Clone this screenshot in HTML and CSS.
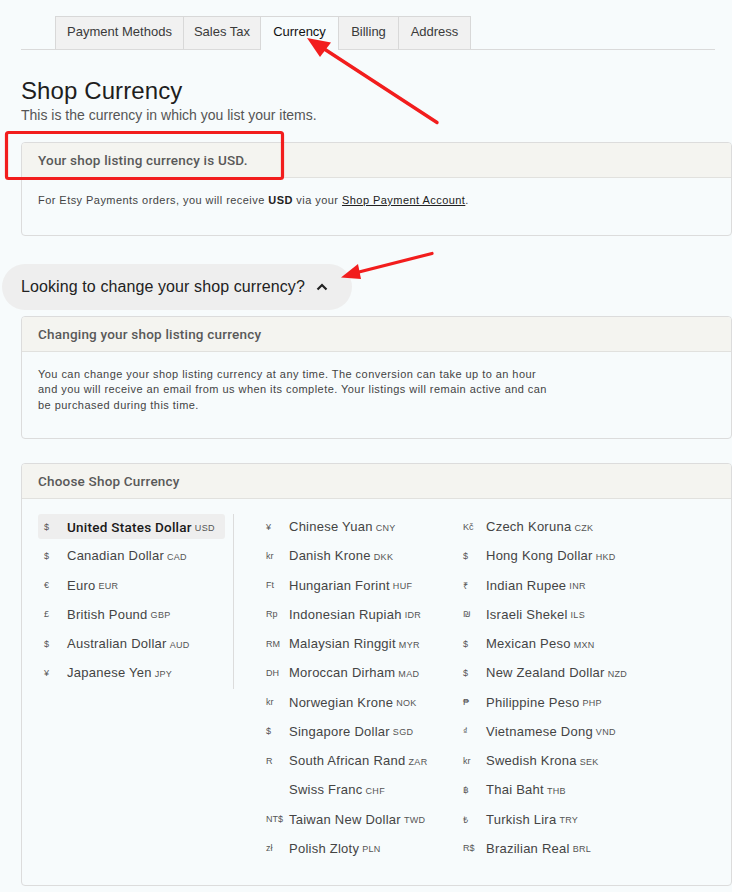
FILE: index.html
```html
<!DOCTYPE html>
<html lang="en">
<head>
<meta charset="utf-8">
<title>Shop Currency</title>
<link rel="stylesheet" href="styles.css">
</head>
<body>
<div class="page">
  <nav class="tabs">
    <span class="tab tab-pay">Payment Methods</span>
    <span class="tab tab-tax">Sales Tax</span>
    <span class="tab tab-cur active">Currency</span>
    <span class="tab tab-bill">Billing</span>
    <span class="tab tab-addr">Address</span>
  </nav>

  <h1 class="title">Shop Currency</h1>
  <p class="subtitle">This is the currency in which you list your items.</p>

  <section class="card card-first">
    <div class="card-head">Your shop listing currency is USD.</div>
    <div class="card-body body-first">
      <p class="small">For Etsy Payments orders, you will receive <b>USD</b> via your <a class="link">Shop Payment Account</a>.</p>
    </div>
  </section>

  <button class="pill">Looking to change your shop currency?
    <svg class="chev" width="12" height="8" viewBox="0 0 12 8"><path d="M1.5 6.5 L6 2 L10.5 6.5" fill="none" stroke="#222" stroke-width="2.2"/></svg>
  </button>

  <section class="card card-second">
    <div class="card-head">Changing your shop listing currency</div>
    <div class="card-body body-second">
      <p class="small">You can change your shop listing currency at any time. The conversion can take up to an hour<br>and you will receive an email from us when its complete. Your listings will remain active and can<br>be purchased during this time.</p>
    </div>
  </section>

  <section class="card card-third">
    <div class="card-head">Choose Shop Currency</div>
    <div class="cur-body">
      <div class="col col-main">
        <div class="row selected"><span class="sym">$</span><span class="name">United States Dollar</span><span class="code">USD</span></div>
        <div class="row"><span class="sym">$</span><span class="name">Canadian Dollar</span><span class="code">CAD</span></div>
        <div class="row"><span class="sym">€</span><span class="name">Euro</span><span class="code">EUR</span></div>
        <div class="row"><span class="sym">£</span><span class="name">British Pound</span><span class="code">GBP</span></div>
        <div class="row"><span class="sym">$</span><span class="name">Australian Dollar</span><span class="code">AUD</span></div>
        <div class="row"><span class="sym">¥</span><span class="name">Japanese Yen</span><span class="code">JPY</span></div>
      </div>
      <div class="col col-a">
        <div class="row"><span class="sym">¥</span><span class="name">Chinese Yuan</span><span class="code">CNY</span></div>
        <div class="row"><span class="sym">kr</span><span class="name">Danish Krone</span><span class="code">DKK</span></div>
        <div class="row"><span class="sym">Ft</span><span class="name">Hungarian Forint</span><span class="code">HUF</span></div>
        <div class="row"><span class="sym">Rp</span><span class="name">Indonesian Rupiah</span><span class="code">IDR</span></div>
        <div class="row"><span class="sym">RM</span><span class="name">Malaysian Ringgit</span><span class="code">MYR</span></div>
        <div class="row"><span class="sym">DH</span><span class="name">Moroccan Dirham</span><span class="code">MAD</span></div>
        <div class="row"><span class="sym">kr</span><span class="name">Norwegian Krone</span><span class="code">NOK</span></div>
        <div class="row"><span class="sym">$</span><span class="name">Singapore Dollar</span><span class="code">SGD</span></div>
        <div class="row"><span class="sym">R</span><span class="name">South African Rand</span><span class="code">ZAR</span></div>
        <div class="row"><span class="sym"></span><span class="name">Swiss Franc</span><span class="code">CHF</span></div>
        <div class="row"><span class="sym">NT$</span><span class="name">Taiwan New Dollar</span><span class="code">TWD</span></div>
        <div class="row"><span class="sym">zł</span><span class="name">Polish Zloty</span><span class="code">PLN</span></div>
      </div>
      <div class="col col-b">
        <div class="row"><span class="sym">Kč</span><span class="name">Czech Koruna</span><span class="code">CZK</span></div>
        <div class="row"><span class="sym">$</span><span class="name">Hong Kong Dollar</span><span class="code">HKD</span></div>
        <div class="row"><span class="sym">₹</span><span class="name">Indian Rupee</span><span class="code">INR</span></div>
        <div class="row"><span class="sym">₪</span><span class="name">Israeli Shekel</span><span class="code">ILS</span></div>
        <div class="row"><span class="sym">$</span><span class="name">Mexican Peso</span><span class="code">MXN</span></div>
        <div class="row"><span class="sym">$</span><span class="name">New Zealand Dollar</span><span class="code">NZD</span></div>
        <div class="row"><span class="sym">₱</span><span class="name">Philippine Peso</span><span class="code">PHP</span></div>
        <div class="row"><span class="sym">₫</span><span class="name">Vietnamese Dong</span><span class="code">VND</span></div>
        <div class="row"><span class="sym">kr</span><span class="name">Swedish Krona</span><span class="code">SEK</span></div>
        <div class="row"><span class="sym">฿</span><span class="name">Thai Baht</span><span class="code">THB</span></div>
        <div class="row"><span class="sym">₺</span><span class="name">Turkish Lira</span><span class="code">TRY</span></div>
        <div class="row"><span class="sym">R$</span><span class="name">Brazilian Real</span><span class="code">BRL</span></div>
      </div>
    </div>
  </section>

  <svg class="annot" width="732" height="892" viewBox="0 0 732 892">
    <rect x="6.5" y="132.5" width="276" height="46" rx="2" fill="none" stroke="#f21d1d" stroke-width="3.2"/>
    <line x1="437" y1="122.5" x2="322" y2="47.5" stroke="#f21d1d" stroke-width="3.4" stroke-linecap="round"/>
    <polygon points="307,38 331,42.5 320,57" fill="#f21d1d"/>
    <line x1="432" y1="253.5" x2="355" y2="273" stroke="#f21d1d" stroke-width="3.2" stroke-linecap="round"/>
    <polygon points="341,277.5 358,264 361,279" fill="#f21d1d"/>
  </svg>
</div>
</body>
</html>
```

FILE: styles.css
```css
* { box-sizing: border-box; }

html, body {
  margin: 0;
  padding: 0;
  background: #f7fbfc;
}

body {
  font-family: "Liberation Sans", Arial, sans-serif;
  color: #222;
  width: 732px;
  height: 892px;
  overflow: hidden;
}

.page {
  position: relative;
  padding: 16px 0 0 21px;
  width: 732px;
  height: 892px;
}

.tabs {
  display: flex;
  width: 694px;
  padding-left: 34px;
  border-bottom: 1px solid #dadada;
  height: 34px;
}

.tab {
  display: flex;
  align-items: center;
  justify-content: center;
  height: 33px;
  padding: 0 0 3px;
  font-size: 13px;
  color: #3a3a3a;
  background: #f1f1f1;
  border: 1px solid #d8d8d8;
  border-bottom: none;
  margin-left: -1px;
  white-space: nowrap;
}

.tab:first-child { margin-left: 0; }

.tab-pay { width: 129px; }
.tab-tax { width: 78px; }
.tab-cur { width: 79px; }
.tab-bill { width: 61px; }
.tab-addr { width: 73px; }

.tab.active {
  background: #f7fbfc;
  color: #111;
  height: 34px;
  padding-bottom: 4px;
  margin-bottom: -1px;
}

.title {
  margin: 26px 0 0;
  font-size: 24px;
  line-height: 30px;
  font-weight: 400;
  color: #1e1e1e;
  letter-spacing: 0.1px;
}

.subtitle {
  margin: 0;
  font-size: 14px;
  line-height: 18px;
  color: #555;
}

.card {
  width: 711px;
  border: 1px solid #dcdcdc;
  border-radius: 4px;
  background: #f7fbfc;
  overflow: hidden;
}

.card-first { margin-top: 18px; }
.card-second { margin-top: 6px; }
.card-third { margin-top: 24px; }

.card-head {
  height: 35px;
  display: flex;
  align-items: center;
  padding: 0 16px;
  background: #f4f4f0;
  border-bottom: 1px solid #e1e1de;
  font-family: Roboto, "Liberation Sans", Arial, sans-serif;
  font-size: 13.5px;
  font-weight: 500;
  color: #595959;
  letter-spacing: 0.2px;
}

.body-first { padding: 15px 16px 26.5px; }
.body-second { padding: 14.5px 16px 25px; }

.small {
  margin: 0;
  font-size: 11px;
  line-height: 15.5px;
  color: #444;
  letter-spacing: 0.45px;
}

.small b { color: #222; }

.link {
  color: #222;
  text-decoration: underline;
}

.pill {
  display: flex;
  align-items: center;
  margin: 28px 0 0 -19px;
  height: 46px;
  padding: 0 24px 0 19px;
  border: none;
  border-radius: 23px;
  background: #eeeeee;
  font-family: inherit;
  font-size: 16px;
  color: #222;
  letter-spacing: 0.1px;
}

.chev { margin-left: 11px; }

.cur-body {
  display: flex;
  align-items: flex-start;
  padding: 15px 16px 24px;
}

.col {
  display: flex;
  flex-direction: column;
  gap: 4.27px;
}

.col-main {
  width: 196px;
  padding-right: 8px;
  padding-bottom: 4px;
  border-right: 1px solid #dcdcdc;
}

.col-a {
  width: 197px;
  margin-left: 26px;
}

.col-b {
  width: 200px;
}

.row {
  display: flex;
  align-items: center;
  height: 25px;
  padding: 0 6px;
  border-radius: 3px;
  white-space: nowrap;
}

.row.selected {
  background: #eeeeee;
}

.sym {
  width: 23px;
  flex: none;
  font-size: 9px;
  color: #555;
}

.name {
  font-size: 13px;
  color: #444;
  letter-spacing: 0.25px;
}

.selected .name {
  font-family: Roboto, "Liberation Sans", Arial, sans-serif;
  color: #1a1a1a;
  font-weight: 500;
  font-size: 13.5px;
  letter-spacing: 0.25px;
}

.code {
  margin-left: 3px;
  font-size: 9px;
  color: #555;
  padding-top: 2px;
  letter-spacing: 0.3px;
}

.annot {
  position: absolute;
  left: 0;
  top: 0;
  pointer-events: none;
}
```
